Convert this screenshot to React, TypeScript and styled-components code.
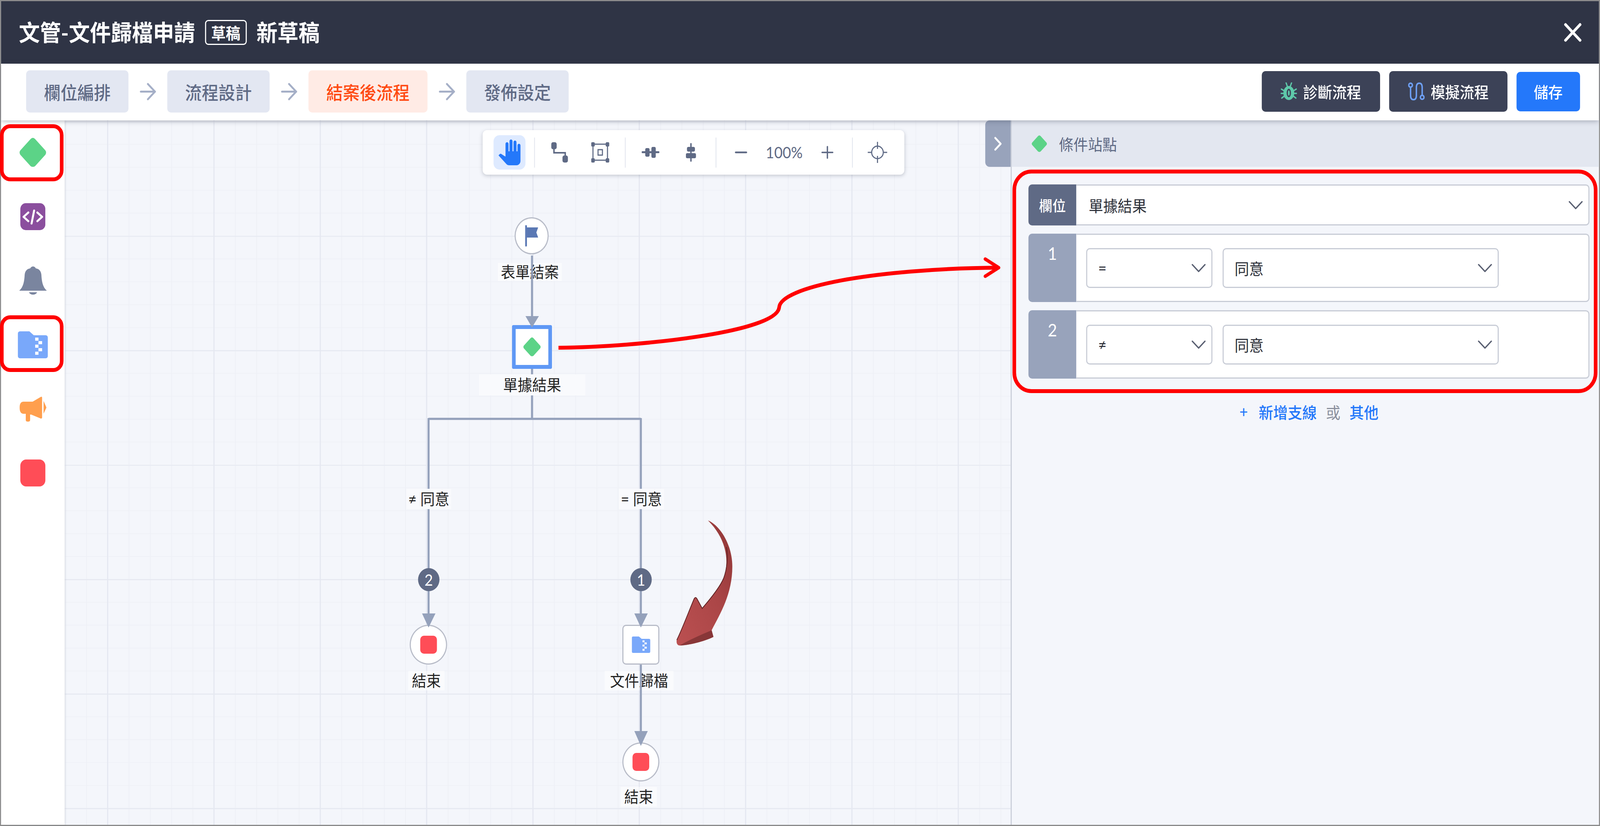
import React from "react";
import styled, { createGlobalStyle } from "styled-components";
import { ArrowRight, ChevronDown, ChevronRight, Minus, Plus, X } from "lucide-react";
import { MdPanTool } from "react-icons/md";

const PAGE_W = 4409;
const PAGE_H = 2114;
const CANVAS_X = 178;
const CANVAS_Y = 308;
const CANVAS_W = 2607;
const CANVAS_H = 1803;

const GlobalStyle = createGlobalStyle`
  html, body {
    margin: 0;
    padding: 0;
    background: #fff;
    overflow: hidden;
  }
  body {
    font-family: Lato, "Noto Sans CJK TC", sans-serif;
  }
  * {
    box-sizing: border-box;
  }
`;

const Page = styled.div`
  position: relative;
  width: ${PAGE_W}px;
  height: ${PAGE_H}px;
  overflow: hidden;
  transform-origin: 0 0;
`;

const Frame = styled.div`
  width: 100%;
  height: 100%;
  border: 3px solid #8c8c8c;
  display: flex;
  flex-direction: column;
`;

const Header = styled.header`
  height: 160px;
  flex: none;
  background: #2f3445;
  color: #fff;
  display: flex;
  align-items: center;
  gap: 27px;
  padding: 0 32px 0 49px;
`;

const Title = styled.div`
  font-size: 58px;
  font-weight: 700;
  line-height: 1;
`;

const DraftBadge = styled.span`
  width: 115px;
  height: 64px;
  border: 3px solid #fff;
  border-radius: 9px;
  font-size: 40px;
  font-weight: 700;
  display: flex;
  align-items: center;
  justify-content: center;
`;

const CloseButton = styled.div`
  margin-left: auto;
  display: flex;
  color: #fff;
`;

const StepBar = styled.nav`
  position: relative;
  z-index: 3;
  height: 145px;
  flex: none;
  background: #fff;
  display: flex;
  align-items: center;
  padding: 0 52px 3px 69px;
  box-shadow: 0 3px 12px rgba(60, 66, 87, 0.35);
`;

const Step = styled.div<{ $active?: boolean }>`
  height: 108px;
  padding: 0 49px;
  border-radius: 10px;
  font-size: 46px;
  font-weight: 500;
  display: flex;
  align-items: center;
  background: ${(p) => (p.$active ? "#ffebe5" : "#e3e7f2")};
  color: ${(p) => (p.$active ? "#ff4a12" : "#5f6a85")};
`;

const StepArrow = styled.div`
  display: flex;
  margin: 0 20px;
  color: #a5afc7;
`;

const Actions = styled.div`
  margin-left: auto;
  display: flex;
  align-items: center;
  gap: 25px;
`;

const ActionButton = styled.div<{ $primary?: boolean }>`
  height: ${(p) => (p.$primary ? "101px" : "104px")};
  width: ${(p) => (p.$primary ? "175px" : "326px")};
  border-radius: 10px;
  background: ${(p) => (p.$primary ? "#2478fa" : "#3c4257")};
  color: #fff;
  font-size: 40px;
  font-weight: 500;
  display: flex;
  align-items: center;
  justify-content: center;
  gap: 17px;
`;

const Main = styled.main`
  flex: 1;
  display: flex;
  min-height: 0;
`;

const Sidebar = styled.aside`
  position: relative;
  z-index: 2;
  width: 175px;
  flex: none;
  background: #fff;
  box-shadow: 2px 0 6px rgba(60, 66, 87, 0.15);
  display: flex;
  flex-direction: column;
`;

const SideItem = styled.div`
  height: 164px;
  display: flex;
  align-items: center;
  justify-content: center;
`;

const StopSquare = styled.div<{ $size: number; $radius: number }>`
  width: ${(p) => p.$size}px;
  height: ${(p) => p.$size}px;
  border-radius: ${(p) => p.$radius}px;
  background: #ff4d57;
`;

const Canvas = styled.section`
  position: relative;
  flex: 1;
  overflow: hidden;
  background-color: #f4f6fb;
  background-image:
    linear-gradient(to right, #e5e8f1 3px, transparent 3px),
    linear-gradient(to bottom, #e7eaf2 3px, transparent 3px),
    linear-gradient(to right, #eef0f6 2px, transparent 2px),
    linear-gradient(to bottom, #eff1f7 2px, transparent 2px);
  background-size:
    293px 293px,
    293px 293px,
    58.6px 58.6px,
    58.6px 58.6px;
  background-position:
    117px 0,
    0 2px,
    0.8px 0,
    0 2px;
`;

const Toolbar = styled.div`
  position: absolute;
  z-index: 4;
  top: 25px;
  left: 1152px;
  height: 114px;
  padding: 0 30px;
  display: flex;
  align-items: center;
  gap: 24px;
  background: #fff;
  border-radius: 12px;
  box-shadow: 0 3px 10px rgba(60, 66, 87, 0.25);
  color: #5f6a85;
`;

const ToolButton = styled.div<{ $active?: boolean }>`
  width: 88px;
  height: 88px;
  border-radius: 16px;
  display: flex;
  align-items: center;
  justify-content: center;
  background: ${(p) => (p.$active ? "#deeaff" : "transparent")};
  color: ${(p) => (p.$active ? "#2478fa" : "#5f6a85")};
`;

const ToolSeparator = styled.div`
  width: 2px;
  height: 77px;
  background: #dfe3ec;
`;

const ZoomGroup = styled.div`
  display: flex;
  align-items: center;
`;

const ZoomValue = styled.div`
  width: 150px;
  font-size: 40px;
  text-align: center;
  color: #5f6a85;
`;

const EdgeLayer = styled.svg`
  position: absolute;
  z-index: 1;
  top: 0;
  left: 0;
`;

const FlowNode = styled.div<{ $x: number; $y: number; $w: number; $h: number; $shape: "circle" | "card" | "selected" }>`
  position: absolute;
  left: ${(p) => p.$x - CANVAS_X}px;
  top: ${(p) => p.$y - CANVAS_Y}px;
  width: ${(p) => p.$w}px;
  height: ${(p) => p.$h}px;
  background: #fff;
  display: flex;
  align-items: center;
  justify-content: center;
  border: ${(p) => (p.$shape === "selected" ? "10px solid #5f98f5" : "3px solid #b8bcc8")};
  border-radius: ${(p) => (p.$shape === "circle" ? "50%" : p.$shape === "card" ? "10px" : "4px")};
`;

const FlowLabel = styled.div<{ $x: number; $y: number; $w: number; $h: number; $over?: boolean }>`
  position: absolute;
  z-index: ${(p) => (p.$over ? 2 : 0)};
  left: ${(p) => p.$x - CANVAS_X}px;
  top: ${(p) => p.$y - CANVAS_Y}px;
  width: ${(p) => p.$w}px;
  height: ${(p) => p.$h}px;
  background: ${(p) => (p.$over ? "#f9fafd" : "rgba(255, 255, 255, 0.5)")};
  color: #222;
  font-size: 40px;
  line-height: 1;
  display: flex;
  align-items: center;
  justify-content: center;
  white-space: pre;
`;

const BranchBadge = styled.div<{ $x: number; $y: number }>`
  position: absolute;
  z-index: 2;
  left: ${(p) => p.$x - CANVAS_X}px;
  top: ${(p) => p.$y - CANVAS_Y}px;
  width: 59px;
  height: 59px;
  border-radius: 50%;
  background: #5f6a85;
  color: #fff;
  font-size: 40px;
  display: flex;
  align-items: center;
  justify-content: center;
`;

const Panel = styled.aside`
  position: relative;
  z-index: 2;
  width: 1621px;
  flex: none;
  background: #f4f6fb;
  border-left: 3px solid #c9ced9;
  display: flex;
  flex-direction: column;
`;

const PanelToggle = styled.div`
  position: absolute;
  top: 0;
  left: -73px;
  width: 70px;
  height: 119px;
  background: #98a3bb;
  border-radius: 12px 0 0 12px;
  color: #fff;
  display: flex;
  align-items: center;
  justify-content: center;
`;

const PanelHeader = styled.div`
  height: 119px;
  flex: none;
  background: #e3e7f0;
  display: flex;
  align-items: center;
  gap: 32px;
  padding-left: 54px;
  color: #5f6a85;
  font-size: 40px;
`;

const PanelBody = styled.div`
  padding: 45px 26px 0 46px;
  display: flex;
  flex-direction: column;
  gap: 21px;
`;

const Row = styled.div<{ $h: number }>`
  height: ${(p) => p.$h}px;
  display: flex;
`;

const RowHead = styled.div<{ $dark?: boolean }>`
  width: 132px;
  flex: none;
  border-radius: 10px 0 0 10px;
  background: ${(p) => (p.$dark ? "#5f6a85" : "#98a3bb")};
  color: #fff;
  font-size: ${(p) => (p.$dark ? "37px" : "44px")};
  font-weight: ${(p) => (p.$dark ? 500 : 400)};
  display: flex;
  justify-content: center;
  align-items: ${(p) => (p.$dark ? "center" : "flex-start")};
  padding-top: ${(p) => (p.$dark ? 0 : 24)}px;
`;

const RowBody = styled.div`
  flex: 1;
  display: flex;
  align-items: center;
  gap: 28px;
  padding-left: 27px;
  background: #fff;
  border: 3px solid #c8ccd6;
  border-left: 0;
  border-radius: 0 10px 10px 0;
`;

const FieldBody = styled(RowBody)`
  padding: 0 0 0 34px;
  justify-content: space-between;
  font-size: 40px;
  color: #2c2f38;
`;

const Select = styled.div<{ $w: number }>`
  width: ${(p) => p.$w}px;
  height: 102px;
  background: #fff;
  border: 3px solid #c8ccd6;
  border-radius: 10px;
  padding-left: 30px;
  display: flex;
  align-items: center;
  justify-content: space-between;
  font-size: 40px;
  color: #2c2f38;
`;

const Chevron = styled(ChevronDown)`
  flex: none;
  color: #5a6072;
`;

const AddLine = styled.div`
  margin-top: 35px;
  display: flex;
  justify-content: center;
  align-items: center;
  gap: 25px;
  font-size: 40px;
  font-weight: 500;
  color: #2478fa;
`;

const AddBranch = styled.span`
  display: flex;
  align-items: center;
  gap: 30px;
`;

const AddOr = styled.span`
  color: #8a8f9c;
  font-weight: 400;
`;

const RedFrame = styled.div<{ $x: number; $y: number; $w: number; $h: number; $r: number }>`
  position: absolute;
  z-index: 5;
  left: ${(p) => p.$x}px;
  top: ${(p) => p.$y}px;
  width: ${(p) => p.$w}px;
  height: ${(p) => p.$h}px;
  border: 10px solid #ff0000;
  border-radius: ${(p) => p.$r}px;
  pointer-events: none;
`;

const AnnotationLayer = styled.svg`
  position: absolute;
  z-index: 5;
  top: 0;
  left: 0;
  pointer-events: none;
`;

const Diamond = ({ size }: { size: number }) => (
  <svg width={size} height={size} viewBox="0 0 100 100">
    <path
      d="M50 1 Q54 1 58 5 L95 43 Q100 50 95 57 L58 95 Q50 100 42 95 L5 57 Q0 50 5 43 L42 5 Q46 1 50 1Z"
      fill="#5cd387"
    />
  </svg>
);

const CodeIcon = () => (
  <svg width={69} height={69} viewBox="0 0 69 69">
    <rect width={69} height={69} rx={15} fill="#8b4f9e" />
    <g fill="none" stroke="#fff" strokeWidth={5.5} strokeLinecap="round" strokeLinejoin="round">
      <polyline points="22,24 9,35 22,46" />
      <polyline points="47,24 60,35 47,46" />
      <line x1={38} y1={19} x2={31} y2={52} />
    </g>
  </svg>
);

const BellIcon = () => (
  <svg width={76} height={73} viewBox="0 0 76 73">
    <path
      d="M38 0 C42 0 44 2 46 5 C54 6 60 11 61 21 C62 37 64 52 76 62 H0 C12 52 14 37 15 21 C16 11 22 6 30 5 C32 2 34 0 38 0Z"
      fill="#7a859f"
    />
    <path d="M27 66 H49 C46 74 30 74 27 66Z" fill="#7a859f" />
  </svg>
);

const FolderIcon = ({ w, h }: { w: number; h: number }) => (
  <svg width={w} height={h} viewBox="0 0 83 69" preserveAspectRatio="none">
    <path
      d="M6 0 H32 L44 10 H77 a6 6 0 0 1 6 6 V63 a6 6 0 0 1 -6 6 H6 a6 6 0 0 1 -6 -6 V6 a6 6 0 0 1 6 -6Z"
      fill="#79a8fa"
    />
    <g fill="#fff">
      <rect x={48} y={16} width={9} height={8} />
      <rect x={57} y={25} width={10} height={8} />
      <rect x={48} y={34} width={9} height={8} />
      <rect x={57} y={43} width={10} height={8} />
      <rect x={48} y={52} width={9} height={8} />
    </g>
  </svg>
);

const MegaphoneIcon = () => (
  <svg width={74} height={66} viewBox="0 0 74 66">
    <path
      d="M10 15 H36 L58 3 Q61 1 62 4 V56 Q61 59 58 58 L32 48 H29 V62 Q29 66 24 66 H22 Q17 66 17 62 V46 H10 Q0 45 0 30 Q0 16 10 15Z"
      fill="#ff9f4e"
    />
    <path d="M66 13 L74 30 L66 46Z" fill="#ff9f4e" />
  </svg>
);

const BugIcon = () => (
  <svg width={45} height={46} viewBox="0 0 45 46">
    <g stroke="#5ec9aa" strokeWidth={3.5} fill="none" strokeLinecap="round">
      <path d="M15 1 L18 9 M30 1 L27 9" />
      <path d="M2 17 L9 21 M43 17 L36 21 M1 28 H8 M44 28 H37 M3 40 L10 35 M42 40 L35 35" />
    </g>
    <ellipse cx={22.5} cy={27} rx={15} ry={18} fill="#5ec9aa" />
    <ellipse cx={22.5} cy={27} rx={6} ry={11} fill="#3c4257" />
    <ellipse cx={22.5} cy={27} rx={2.5} ry={7} fill="#5ec9aa" />
  </svg>
);

const RouteIcon = () => (
  <svg width={46} height={46} viewBox="0 0 46 46" fill="none" stroke="#6ea0f5" strokeWidth={4}>
    <circle cx={7} cy={7} r={5} />
    <path d="M7 12 V33 q0 11 8 11 q8 0 8 -11 V13 q0 -11 8 -11 q8 0 8 11 V32" />
    <circle cx={39} cy={38} r={5} />
  </svg>
);

const FlagIcon = () => (
  <svg width={36} height={55} viewBox="0 0 36 55">
    <rect width={5} height={55} rx={2.5} fill="#5a78b4" />
    <polygon points="5,6 36,6 31,19 36,32 5,32" fill="#5a78b4" />
  </svg>
);

const ConnectorIcon = () => (
  <svg width={46} height={52} viewBox="0 0 46 52" fill="#5f6a85">
    <rect x={0} y={0} width={15} height={18} rx={5} />
    <rect x={31} y={34} width={15} height={18} rx={5} />
    <path d="M7.5 16 V27 H38.5 V36" fill="none" stroke="#5f6a85" strokeWidth={4} />
  </svg>
);

const FrameIcon = () => (
  <svg width={50} height={52} viewBox="0 0 50 52" fill="#5f6a85">
    <rect x={0} y={0} width={10} height={11} rx={3} />
    <rect x={40} y={0} width={10} height={11} rx={3} />
    <rect x={0} y={41} width={10} height={11} rx={3} />
    <rect x={40} y={41} width={10} height={11} rx={3} />
    <path d="M5 5 H45 V46 H5Z" fill="none" stroke="#5f6a85" strokeWidth={3} />
    <rect x={19} y={19} width={12} height={14} fill="none" stroke="#5f6a85" strokeWidth={3} />
  </svg>
);

const AlignHIcon = () => (
  <svg width={49} height={28} viewBox="0 0 49 28" fill="#5f6a85">
    <rect x={0} y={11} width={49} height={5} rx={2} />
    <rect x={10} y={3} width={12} height={22} rx={4} />
    <rect x={27} y={0} width={12} height={28} rx={4} />
  </svg>
);

const AlignVIcon = () => (
  <svg width={28} height={48} viewBox="0 0 28 48" fill="#5f6a85">
    <rect x={12} y={0} width={4} height={48} rx={2} />
    <rect x={3} y={10} width={22} height={12} rx={4} />
    <rect x={0} y={26} width={28} height={13} rx={4} />
  </svg>
);

const CrosshairIcon = () => (
  <svg width={54} height={54} viewBox="0 0 54 54" fill="none" stroke="#5f6a85" strokeWidth={3}>
    <circle cx={27} cy={27} r={16} />
    <path d="M27 0 V18 M27 36 V54 M0 27 H10 M44 27 H54" />
  </svg>
);

const steps = [
  { label: "欄位編排" },
  { label: "流程設計" },
  { label: "結案後流程", active: true },
  { label: "發佈設定" },
];

const flowLabels = [
  { text: "表單結案", x: 1372, y: 673, w: 176, h: 46 },
  { text: "單據結果", x: 1320, y: 958, w: 293, h: 54, over: true },
  { text: "≠ 同意", x: 1120, y: 1251, w: 123, h: 52, over: true },
  { text: "= 同意", x: 1705, y: 1251, w: 125, h: 52, over: true },
  { text: "結束", x: 1125, y: 1717, w: 100, h: 50 },
  { text: "文件歸檔", x: 1666, y: 1717, w: 190, h: 50 },
  { text: "結束", x: 1710, y: 2014, w: 100, h: 50 },
];

const edges = [
  "M1466 654 V812",
  "M1466 944 V1072",
  "M1181 1072 H1766",
  "M1181 1070 V1572",
  "M1766 1070 V1572",
  "M1766 1701 V1873",
];

const arrowHeads = [
  "1448,809 1485,809 1466,838",
  "1163,1570 1200,1570 1181,1606",
  "1748,1570 1785,1570 1766,1606",
  "1748,1871 1785,1871 1766,1909",
];

const conditions = [
  { no: "1", op: "=", value: "同意" },
  { no: "2", op: "≠", value: "同意" },
];

const App = () => {
  const fit = Math.min(1, window.innerWidth / PAGE_W);

  return (
    <Page style={{ transform: `scaleX(${fit})` }}>
      <GlobalStyle />
      <Frame>
        <Header>
          <Title>文管-文件歸檔申請</Title>
          <DraftBadge>草稿</DraftBadge>
          <Title>新草稿</Title>
          <CloseButton>
            <X size={80} strokeWidth={2.2} />
          </CloseButton>
        </Header>

        <StepBar>
          {steps.map((step, index) => (
            <React.Fragment key={step.label}>
              {index > 0 && (
                <StepArrow>
                  <ArrowRight size={67} strokeWidth={1.8} />
                </StepArrow>
              )}
              <Step $active={step.active}>{step.label}</Step>
            </React.Fragment>
          ))}
          <Actions>
            <ActionButton>
              <BugIcon />
              診斷流程
            </ActionButton>
            <ActionButton>
              <RouteIcon />
              模擬流程
            </ActionButton>
            <ActionButton $primary>儲存</ActionButton>
          </Actions>
        </StepBar>

        <Main>
          <Sidebar>
            <SideItem>
              <Diamond size={77} />
            </SideItem>
            <SideItem>
              <CodeIcon />
            </SideItem>
            <SideItem>
              <BellIcon />
            </SideItem>
            <SideItem>
              <FolderIcon w={83} h={69} />
            </SideItem>
            <SideItem>
              <MegaphoneIcon />
            </SideItem>
            <SideItem>
              <StopSquare $size={69} $radius={16} />
            </SideItem>
          </Sidebar>

          <Canvas>
            <Toolbar>
              <ToolButton $active>
                <MdPanTool size={66} />
              </ToolButton>
              <ToolSeparator />
              <ToolButton>
                <ConnectorIcon />
              </ToolButton>
              <ToolButton>
                <FrameIcon />
              </ToolButton>
              <ToolSeparator />
              <ToolButton>
                <AlignHIcon />
              </ToolButton>
              <ToolButton>
                <AlignVIcon />
              </ToolButton>
              <ToolSeparator />
              <ZoomGroup>
                <ToolButton>
                  <Minus size={50} strokeWidth={2.2} />
                </ToolButton>
                <ZoomValue>100%</ZoomValue>
                <ToolButton>
                  <Plus size={50} strokeWidth={1.8} />
                </ToolButton>
              </ZoomGroup>
              <ToolSeparator />
              <ToolButton>
                <CrosshairIcon />
              </ToolButton>
            </Toolbar>

            <FlowNode $x={1418} $y={556} $w={94} $h={95} $shape="circle">
              <FlagIcon />
            </FlowNode>
            <FlowNode $x={1411} $y={832} $w={110} $h={112} $shape="selected">
              <Diamond size={50} />
            </FlowNode>
            <FlowNode $x={1129} $y={1599} $w={103} $h={102} $shape="circle">
              <StopSquare $size={46} $radius={10} />
            </FlowNode>
            <FlowNode $x={1715} $y={1599} $w={102} $h={102} $shape="card">
              <FolderIcon w={51} h={42} />
            </FlowNode>
            <FlowNode $x={1715} $y={1900} $w={102} $h={100} $shape="circle">
              <StopSquare $size={46} $radius={10} />
            </FlowNode>

            {flowLabels.map((label) => (
              <FlowLabel key={label.text + label.x} $x={label.x} $y={label.y} $w={label.w} $h={label.h} $over={label.over}>
                {label.text}
              </FlowLabel>
            ))}

            <EdgeLayer
              width={CANVAS_W}
              height={CANVAS_H}
              viewBox={`${CANVAS_X} ${CANVAS_Y} ${CANVAS_W} ${CANVAS_H}`}
            >
              {edges.map((d) => (
                <path key={d} d={d} fill="none" stroke="#94a1bb" strokeWidth={5.5} />
              ))}
              {arrowHeads.map((points) => (
                <polygon key={points} points={points} fill="#94a1bb" />
              ))}
            </EdgeLayer>

            <BranchBadge $x={1152} $y={1454}>2</BranchBadge>
            <BranchBadge $x={1737} $y={1454}>1</BranchBadge>
          </Canvas>

          <Panel>
            <PanelToggle>
              <ChevronRight size={60} strokeWidth={2} />
            </PanelToggle>
            <PanelHeader>
              <Diamond size={44} />
              條件站點
            </PanelHeader>
            <PanelBody>
              <Row $h={105}>
                <RowHead $dark>欄位</RowHead>
                <FieldBody>
                  單據結果
                  <Chevron size={70} strokeWidth={1.2} />
                </FieldBody>
              </Row>
              {conditions.map((item) => (
                <Row key={item.no} $h={175}>
                  <RowHead>{item.no}</RowHead>
                  <RowBody>
                    <Select $w={348}>
                      {item.op}
                      <Chevron size={70} strokeWidth={1.2} />
                    </Select>
                    <Select $w={761}>
                      {item.value}
                      <Chevron size={70} strokeWidth={1.2} />
                    </Select>
                  </RowBody>
                </Row>
              ))}
              <AddLine>
                <AddBranch>
                  <span>+</span>
                  新增支線
                </AddBranch>
                <AddOr>或</AddOr>
                <span>其他</span>
              </AddLine>
            </PanelBody>
          </Panel>
        </Main>
      </Frame>

      <RedFrame $x={0} $y={318} $w={175} $h={146} $r={28} />
      <RedFrame $x={0} $y={807} $w={175} $h={145} $r={28} />
      <RedFrame $x={2790} $y={434} $w={1612} $h={572} $r={52} />

      <AnnotationLayer width={PAGE_W} height={PAGE_H} viewBox={`0 0 ${PAGE_W} ${PAGE_H}`}>
        <defs>
          <linearGradient id="curlFill" x1="0" y1="1" x2="1" y2="0">
            <stop offset="0" stopColor="#bb5051" />
            <stop offset="0.55" stopColor="#ab4647" />
            <stop offset="1" stopColor="#8e3535" />
          </linearGradient>
        </defs>
        <path
          d="M1539 890 C1760 888 2140 850 2147 787 C2150 735 2400 688 2752 685"
          fill="none"
          stroke="#ff0000"
          strokeWidth={10}
        />
        <path
          d="M2715 663 L2752 685 L2715 707"
          fill="none"
          stroke="#ff0000"
          strokeWidth={9}
          strokeLinecap="round"
          strokeLinejoin="round"
        />
        <path
          d="M1951 1332 C1985 1345 2018 1395 2018 1450 C2018 1520 1985 1570 1961 1613 L1966 1630 C1940 1642 1895 1652 1873 1652 C1866 1652 1863 1645 1865 1637 C1880 1610 1900 1560 1913 1532 Q1917 1526 1921 1533 L1935 1557 C1960 1530 1985 1500 1994 1480 C2008 1445 2008 1385 1951 1332Z"
          fill="url(#curlFill)"
        />
        <path
          d="M1966 1630 C1940 1642 1895 1652 1873 1652 C1895 1640 1930 1625 1961 1613Z"
          fill="#7a3032"
          opacity={0.75}
        />
        <path
          d="M1865 1638 C1880 1610 1900 1560 1913 1532 Q1917 1526 1921 1533 L1935 1557 C1960 1530 1985 1500 1994 1480 C2004 1455 2006 1425 2002 1400"
          fill="none"
          stroke="#5e2022"
          strokeWidth={2}
        />
      </AnnotationLayer>
    </Page>
  );
};

export default App;
